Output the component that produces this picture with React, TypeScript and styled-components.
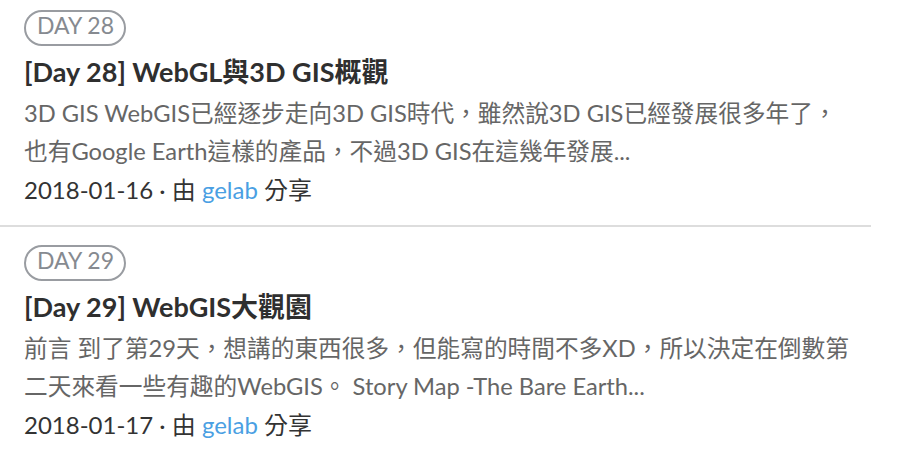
import React from "react";
import styled, { createGlobalStyle } from "styled-components";

const GlobalStyle = createGlobalStyle`
  html, body {
    margin: 0;
    padding: 0;
    background: #ffffff;
  }
  body {
    font-family: Lato, "Noto Sans CJK TC", sans-serif;
  }
`;

const List = styled.ul`
  list-style: none;
  margin: 0;
  padding: 0;
  width: 871px;
`;

const Item = styled.li<{ $first?: boolean }>`
  display: flex;
  flex-direction: column;
  align-items: flex-start;
  padding: ${(p) => (p.$first ? "10px" : "18px")} 0 16px 24px;
  border-bottom: 2px solid #dddddd;
  &:last-child {
    border-bottom: none;
  }
`;

const Badge = styled.span`
  display: inline-block;
  box-sizing: border-box;
  height: 36px;
  padding: 0 10px 5px 11px;
  border: 2px solid #999ca1;
  border-radius: 18px;
  font-size: 23px;
  line-height: 27px;
  color: #868a90;
  white-space: nowrap;
`;

const Title = styled.h3`
  margin: 8px 0 4px;
  font-size: 27px;
  line-height: 36px;
  font-weight: 700;
  color: #2f2f2f;
  white-space: nowrap;
`;

const Excerpt = styled.p`
  margin: 0;
  font-size: 23.7px;
  line-height: 38px;
  color: #666666;
`;

const ExcerptLine = styled.span`
  display: block;
  white-space: nowrap;
`;

const Meta = styled.div`
  margin-top: 1px;
  font-size: 24px;
  line-height: 38px;
  color: #333333;
  white-space: nowrap;
`;

const Author = styled.a`
  color: #4a9fe3;
  text-decoration: none;
`;

type Post = {
  day: number;
  title: string;
  lines: string[];
  date: string;
  author: string;
};

const posts: Post[] = [
  {
    day: 28,
    title: "[Day 28] WebGL與3D GIS概觀",
    lines: [
      "3D GIS WebGIS已經逐步走向3D GIS時代，雖然說3D GIS已經發展很多年了，",
      "也有Google Earth這樣的產品，不過3D GIS在這幾年發展...",
    ],
    date: "2018-01-16",
    author: "gelab",
  },
  {
    day: 29,
    title: "[Day 29] WebGIS大觀園",
    lines: [
      "前言 到了第29天，想講的東西很多，但能寫的時間不多XD，所以決定在倒數第",
      "二天來看一些有趣的WebGIS。 Story Map -The Bare Earth...",
    ],
    date: "2018-01-17",
    author: "gelab",
  },
];

export default function App() {
  return (
    <>
      <GlobalStyle />
      <List>
        {posts.map((post, i) => (
          <Item key={post.day} $first={i === 0}>
            <Badge>DAY {post.day}</Badge>
            <Title>{post.title}</Title>
            <Excerpt>
              {post.lines.map((line) => (
                <ExcerptLine key={line}>{line}</ExcerptLine>
              ))}
            </Excerpt>
            <Meta>
              {post.date} · 由 <Author href="#">{post.author}</Author> 分享
            </Meta>
          </Item>
        ))}
      </List>
    </>
  );
}
